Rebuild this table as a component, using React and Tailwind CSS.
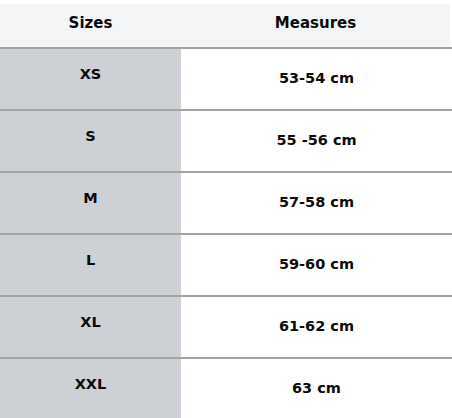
const rows = [
  { size: "XS", measure: "53-54 cm" },
  { size: "S", measure: "55 -56 cm" },
  { size: "M", measure: "57-58 cm" },
  { size: "L", measure: "59-60 cm" },
  { size: "XL", measure: "61-62 cm" },
  { size: "XXL", measure: "63 cm" },
];

export default function App() {
  return (
    <div
      className="h-[418px] w-[452px] overflow-hidden bg-white pt-[4px] text-[#0a0a0a] font-bold"
      style={{ fontFamily: '"DejaVu Sans", sans-serif' }}
    >
      {/* Header */}
      <div className="grid h-[43px] w-[450px] grid-cols-[181px_1fr] items-center bg-[#f4f5f7] pb-[5px] text-[15px]">
        <div className="text-center">Sizes</div>
        <div className="text-center">Measures</div>
      </div>

      {rows.map((row) => (
        <div
          key={row.size}
          className="grid h-[62px] grid-cols-[181px_1fr] border-t-[2px] border-[#a3a3a3] text-[14.5px]"
        >
          <div className="flex items-center justify-center bg-[#cdd0d4] pb-[9px]">
            {row.size}
          </div>
          <div className="flex items-center justify-center">{row.measure}</div>
        </div>
      ))}
    </div>
  );
}
